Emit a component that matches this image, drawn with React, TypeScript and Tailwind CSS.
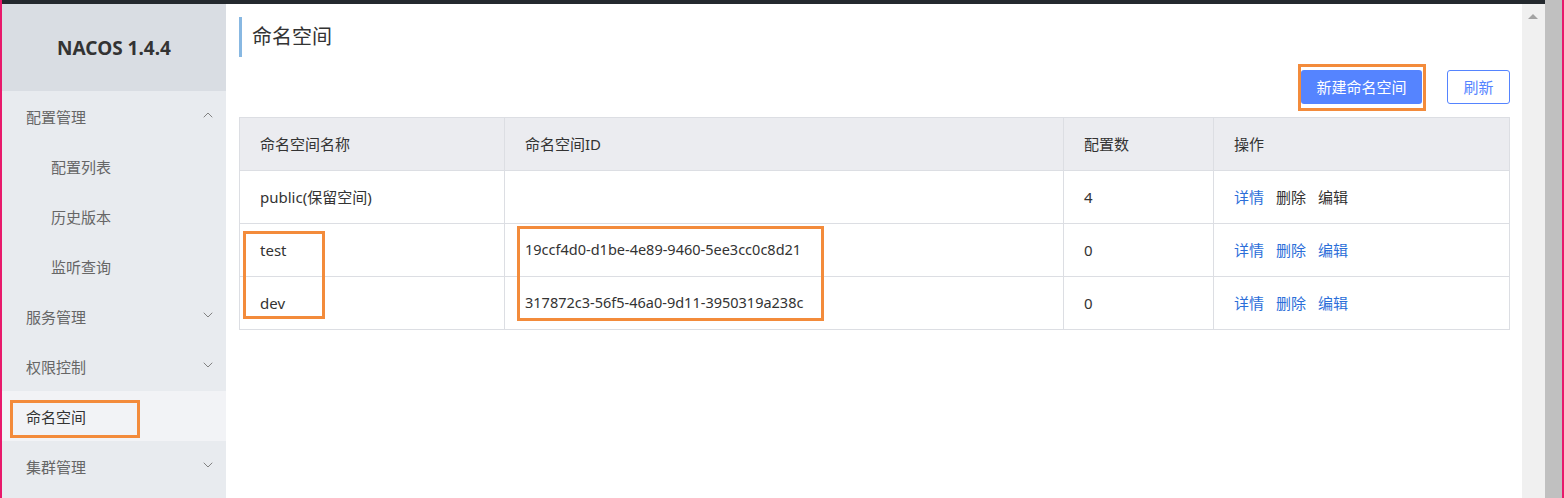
import { ChevronDown, ChevronUp } from "lucide-react";

const font = { fontFamily: '"Noto Sans", "Noto Sans CJK SC", sans-serif' };

interface MenuItem {
  readonly label: string;
  readonly sub?: boolean;
  readonly open?: boolean;
  readonly group?: boolean;
  readonly active?: boolean;
}

const menu: MenuItem[] = [
  { label: "配置管理", group: true, open: true },
  { label: "配置列表", sub: true },
  { label: "历史版本", sub: true },
  { label: "监听查询", sub: true },
  { label: "服务管理", group: true },
  { label: "权限控制", group: true },
  { label: "命名空间", active: true },
  { label: "集群管理", group: true },
];

interface Row {
  readonly name: string;
  readonly id: string;
  readonly count: number;
  readonly reserved?: boolean;
}

const rows: Row[] = [
  { name: "public(保留空间)", id: "", count: 4, reserved: true },
  { name: "test", id: "19ccf4d0-d1be-4e89-9460-5ee3cc0c8d21", count: 0 },
  { name: "dev", id: "317872c3-56f5-46a0-9d11-3950319a238c", count: 0 },
];

function Sidebar() {
  return (
    <div className="w-[224px] shrink-0 bg-[#e8ebef] flex flex-col">
      <div className="h-[87px] bg-[#d9dde3] flex items-center justify-center pt-[1px]">
        <span className="text-[19px] font-bold text-[#333]">NACOS 1.4.4</span>
      </div>
      {menu.map((m) => (
        <div
          key={m.label}
          className={`h-[50px] flex items-center justify-between pr-[10px] pt-[3px] text-[15px] ${
            m.sub ? "pl-[49px]" : "pl-[24px]"
          } ${m.active ? "bg-[#f2f3f6] text-[#333]" : "text-[#666]"}`}
        >
          <span>{m.label}</span>
          {m.group &&
            (m.open ? (
              <ChevronUp size={16} strokeWidth={1.4} className="text-[#7a7a7a] -mt-[6px]" />
            ) : (
              <ChevronDown size={16} strokeWidth={1.4} className="text-[#7a7a7a] -mt-[6px]" />
            ))}
        </div>
      ))}
    </div>
  );
}

function Actions({ reserved }: { readonly reserved?: boolean }) {
  const other = reserved ? "text-[#333]" : "text-[#2b6ed9]";
  return (
    <div className="flex gap-[12px]">
      <span className="text-[#2b6ed9]">详情</span>
      <span className={other}>删除</span>
      <span className={other}>编辑</span>
    </div>
  );
}

function NamespaceTable() {
  return (
    <table className="w-full border-collapse border border-[#dcdee3] text-[15px] text-[#333]">
      <colgroup>
        <col className="w-[265px]" />
        <col className="w-[559px]" />
        <col className="w-[150px]" />
        <col />
      </colgroup>
      <thead>
        <tr className="h-[53px] bg-[#ebecf0]">
          <th className="px-[20px] text-left font-normal border border-[#dcdee3]">命名空间名称</th>
          <th className="px-[20px] text-left font-normal border border-[#dcdee3]">命名空间ID</th>
          <th className="px-[20px] text-left font-normal border border-[#dcdee3]">配置数</th>
          <th className="px-[20px] text-left font-normal border border-[#dcdee3]">操作</th>
        </tr>
      </thead>
      <tbody>
        {rows.map((r) => (
          <tr key={r.name} className="h-[53px]">
            <td className="px-[20px] border border-[#dcdee3]">{r.name}</td>
            <td className="px-[20px] border border-[#dcdee3] text-[14.5px]">{r.id}</td>
            <td className="px-[20px] border border-[#dcdee3]">{r.count}</td>
            <td className="px-[20px] border border-[#dcdee3]">
              <Actions reserved={r.reserved} />
            </td>
          </tr>
        ))}
      </tbody>
    </table>
  );
}

export default function App() {
  return (
    <div className="relative w-[1564px] h-[498px] flex overflow-hidden bg-white" style={font}>
      <div className="w-[2px] shrink-0 bg-[#e8196b]" />
      <div className="flex-1 flex flex-col min-w-0">
        <div className="h-[4px] bg-[#24292e] shrink-0" />
        <div className="flex-1 flex min-h-0">
          <Sidebar />
          <main className="flex-1 px-[13px] pr-[12px] flex flex-col">
            <div className="mt-[13px] h-[40px] border-l-[3px] border-[#88b8e2] flex items-center pl-[10px]">
              <h1 className="text-[20px] text-[#333] font-normal">命名空间</h1>
            </div>
            <div className="mt-[13px] flex justify-end gap-[25px]">
              <button className="h-[34px] w-[121px] rounded-[3px] bg-[#5584ff] text-white text-[15px]">
                新建命名空间
              </button>
              <button className="h-[34px] w-[63px] rounded-[3px] border border-[#5584ff] text-[#5584ff] text-[15px] bg-white">
                刷新
              </button>
            </div>
            <div className="mt-[13px]">
              <NamespaceTable />
            </div>
          </main>
          <div className="w-[23px] shrink-0 bg-[#f0f0f0] flex justify-center pt-[10px]">
            <div className="w-0 h-0 border-l-[5px] border-r-[5px] border-b-[5px] border-l-transparent border-r-transparent border-b-[#a3a3a3] mr-[2px]" />
          </div>
        </div>
      </div>
      <div className="w-[17px] shrink-0 bg-[#c0c0c0]" />
      <div className="w-[2px] shrink-0 bg-[#e8196b]" />

      {/* orange annotation boxes */}
      <div className="absolute left-[1298px] top-[64px] w-[128px] h-[47px] border-[3px] border-[#f38b3b]" />
      <div className="absolute left-[243px] top-[231px] w-[82px] h-[88px] border-[3px] border-[#f38b3b]" />
      <div className="absolute left-[517px] top-[226px] w-[307px] h-[95px] border-[3px] border-[#f38b3b]" />
      <div className="absolute left-[10px] top-[400px] w-[130px] h-[38px] border-[3px] border-[#f38b3b]" />
    </div>
  );
}
